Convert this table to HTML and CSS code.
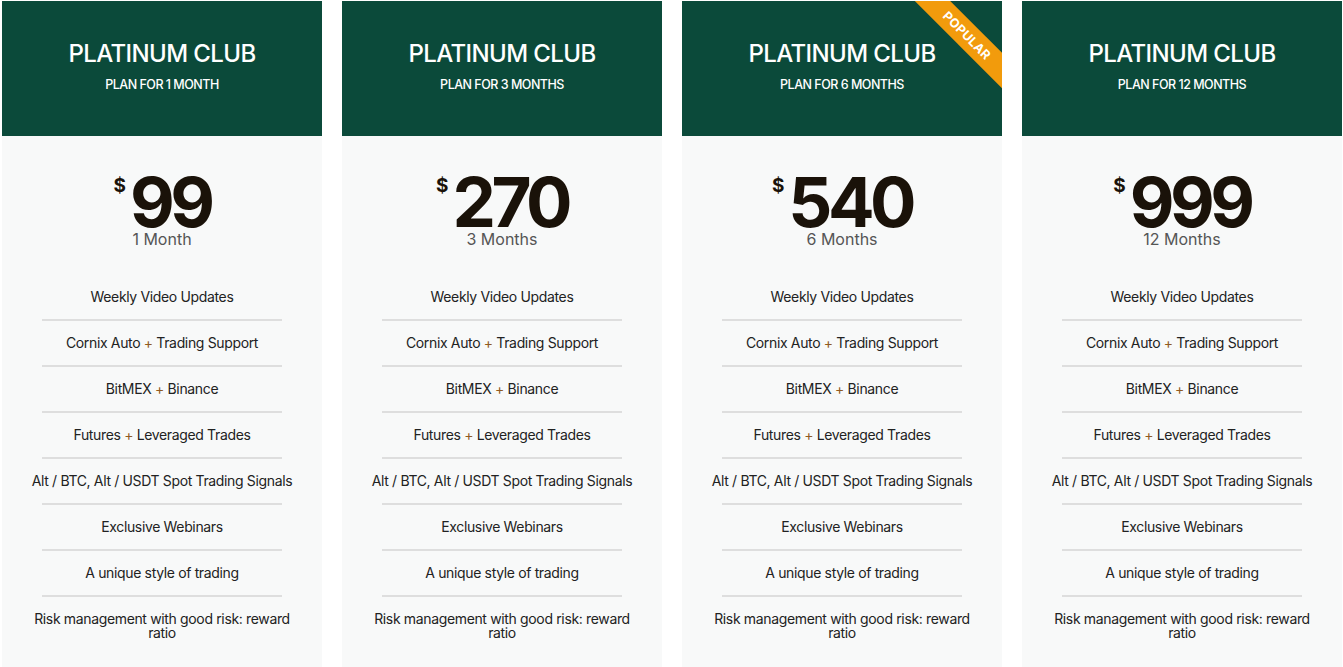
FILE: index.html
```html
<!DOCTYPE html>
<html lang="en">
<head>
<meta charset="utf-8">
<title>Platinum Club Plans</title>
<link rel="stylesheet" href="styles.css">
</head>
<body>
<div class="plans">
  <div class="plan">
    <div class="plan-head">
      <h2 class="plan-title">PLATINUM CLUB</h2>
      <p class="plan-sub">PLAN FOR 1 MONTH</p>
    </div>
    <div class="plan-body">
      <div class="price"><span class="cur">$</span><span class="amt">99</span></div>
      <div class="period">1 Month</div>
      <ul class="features">
        <li>Weekly Video Updates</li>
        <li>Cornix Auto <span class="plus">+</span> Trading Support</li>
        <li>BitMEX <span class="plus">+</span> Binance</li>
        <li>Futures <span class="plus">+</span> Leveraged Trades</li>
        <li>Alt / BTC, Alt / USDT Spot Trading Signals</li>
        <li>Exclusive Webinars</li>
        <li>A unique style of trading</li>
        <li>Risk management with good risk: reward ratio</li>
      </ul>
      <a class="btn" href="#" aria-label="Buy Now"></a>
    </div>
  </div>
  <div class="plan">
    <div class="plan-head">
      <h2 class="plan-title">PLATINUM CLUB</h2>
      <p class="plan-sub">PLAN FOR 3 MONTHS</p>
    </div>
    <div class="plan-body">
      <div class="price"><span class="cur">$</span><span class="amt">270</span></div>
      <div class="period">3 Months</div>
      <ul class="features">
        <li>Weekly Video Updates</li>
        <li>Cornix Auto <span class="plus">+</span> Trading Support</li>
        <li>BitMEX <span class="plus">+</span> Binance</li>
        <li>Futures <span class="plus">+</span> Leveraged Trades</li>
        <li>Alt / BTC, Alt / USDT Spot Trading Signals</li>
        <li>Exclusive Webinars</li>
        <li>A unique style of trading</li>
        <li>Risk management with good risk: reward ratio</li>
      </ul>
      <a class="btn" href="#" aria-label="Buy Now"></a>
    </div>
  </div>
  <div class="plan">
    <div class="ribbon">POPULAR</div>
    <div class="plan-head">
      <h2 class="plan-title">PLATINUM CLUB</h2>
      <p class="plan-sub">PLAN FOR 6 MONTHS</p>
    </div>
    <div class="plan-body">
      <div class="price"><span class="cur">$</span><span class="amt">540</span></div>
      <div class="period">6 Months</div>
      <ul class="features">
        <li>Weekly Video Updates</li>
        <li>Cornix Auto <span class="plus">+</span> Trading Support</li>
        <li>BitMEX <span class="plus">+</span> Binance</li>
        <li>Futures <span class="plus">+</span> Leveraged Trades</li>
        <li>Alt / BTC, Alt / USDT Spot Trading Signals</li>
        <li>Exclusive Webinars</li>
        <li>A unique style of trading</li>
        <li>Risk management with good risk: reward ratio</li>
      </ul>
      <a class="btn" href="#" aria-label="Buy Now"></a>
    </div>
  </div>
  <div class="plan">
    <div class="plan-head">
      <h2 class="plan-title">PLATINUM CLUB</h2>
      <p class="plan-sub">PLAN FOR 12 MONTHS</p>
    </div>
    <div class="plan-body">
      <div class="price"><span class="cur">$</span><span class="amt">999</span></div>
      <div class="period">12 Months</div>
      <ul class="features">
        <li>Weekly Video Updates</li>
        <li>Cornix Auto <span class="plus">+</span> Trading Support</li>
        <li>BitMEX <span class="plus">+</span> Binance</li>
        <li>Futures <span class="plus">+</span> Leveraged Trades</li>
        <li>Alt / BTC, Alt / USDT Spot Trading Signals</li>
        <li>Exclusive Webinars</li>
        <li>A unique style of trading</li>
        <li>Risk management with good risk: reward ratio</li>
      </ul>
      <a class="btn" href="#" aria-label="Buy Now"></a>
    </div>
  </div>
</div>
</body>
</html>
```

FILE: styles.css
```css
* { box-sizing: border-box; }

html, body {
  margin: 0;
  background: #ffffff;
  font-family: Inter, "Noto Sans", sans-serif;
  color: #222222;
}

body {
  padding: 1px 1px 0 2px;
  overflow: hidden;
  height: 667px;
}

.plans {
  display: grid;
  grid-template-columns: repeat(4, 320px);
  gap: 20px;
}

.plan {
  position: relative;
  overflow: hidden;
  background: #f8f9f9;
}

.plan-head {
  background: #0b4a3a;
  height: 135px;
  padding-top: 39px;
  text-align: center;
  color: #ffffff;
}

.plan-title {
  margin: 0;
  font-size: 24px;
  line-height: 28px;
  font-weight: 500;
  letter-spacing: -0.6px;
}

.plan-sub {
  margin: 9px 0 0;
  font-size: 12.5px;
  line-height: 16px;
  font-weight: 500;
  letter-spacing: -0.5px;
}

.ribbon {
  position: absolute;
  top: 22px;
  left: 215px;
  width: 140px;
  height: 25px;
  line-height: 25px;
  background: #f29b0c;
  color: #ffffff;
  font-size: 12.5px;
  font-weight: 700;
  text-align: center;
  letter-spacing: 0.3px;
  transform: rotate(45deg);
  z-index: 2;
}

.plan-body {
  padding-top: 38px;
  text-align: center;
}

.price {
  display: flex;
  justify-content: center;
  align-items: flex-start;
  color: #1a1209;
  height: 56px;
}

.cur {
  font-size: 19px;
  line-height: 19px;
  font-weight: 700;
  margin-top: 2px;
  margin-right: 4px;
}

.amt {
  font-size: 69px;
  line-height: 56px;
  font-weight: 700;
  letter-spacing: -4.5px;
}

.period {
  margin-top: -1px;
  font-size: 16px;
  line-height: 20px;
  color: #555555;
}

.features {
  list-style: none;
  margin: 26px 0 0;
  padding: 0 20px;
}

.features li {
  position: relative;
  padding: 15px 0 17px;
  font-size: 14px;
  line-height: 14px;
  color: #222222;
  letter-spacing: -0.35px;
}

.features li::after {
  content: "";
  position: absolute;
  left: 20px;
  right: 20px;
  bottom: 0;
  height: 2px;
  background: #dedede;
}

.features li:last-child::after {
  display: none;
}

.plus {
  color: #8f5a22;
}

.btn {
  display: block;
  width: 146px;
  height: 44px;
  margin: 10px auto 0;
  background: #eeeeee;
  border-radius: 4px;
  text-decoration: none;
}
```
